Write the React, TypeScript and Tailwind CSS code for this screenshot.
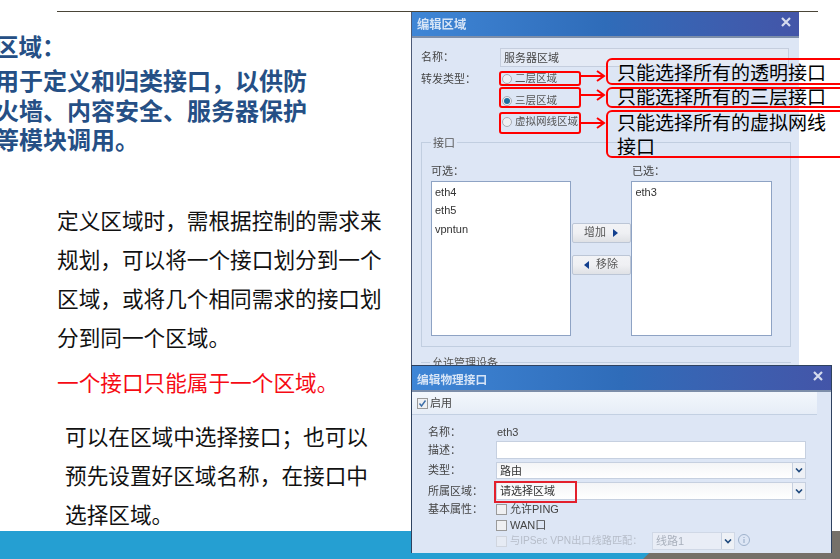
import React from "react";

const FONT = "font-['Liberation_Sans','Noto_Sans_CJK_SC',sans-serif]";

function Close() {
  return (
    <svg width="12" height="12" viewBox="0 0 12 12" className="shrink-0">
      <path d="M2 2 L10 10 M10 2 L2 10" stroke="#d5dcee" strokeWidth="2.2" />
    </svg>
  );
}

function TitleBar({ title, size }: { title: string; size: string }) {
  return (
    <div className="h-[26px] flex flex-col">
      <div className="h-[24px] flex items-start justify-between pl-[5px] pr-[7px] pt-[4px] bg-gradient-to-r from-[#3f86d6] via-[#2f6cb9] to-[#4355a8]">
        <span className={`${size} mt-[1px] leading-[17px] font-bold text-[#d6e4f6]`}>{title}</span>
        <Close />
      </div>
      <div className="h-[2px] bg-[#7d8ea9]" />
    </div>
  );
}

function Radio({ checked, label }: { checked?: boolean; label: string }) {
  return (
    <div className="flex items-center h-full gap-[3px] pl-[2px]">
      <span className="w-[10px] h-[10px] rounded-full border border-[#a7acb5] bg-[#eef0f4] flex items-center justify-center">
        {checked && <span className="w-[6px] h-[6px] rounded-full bg-[#1f6f9f]" />}
      </span>
      <span className="text-[10.5px] text-[#555] whitespace-nowrap">{label}</span>
    </div>
  );
}

function ListBox({ items, w }: { items: string[]; w: string }) {
  return (
    <div className={`${w} h-[155px] bg-white border border-[#8ea3c4] pl-[3px] pt-[1px] text-[11px] leading-[18.7px] text-[#333]`}>
      {items.map((i) => (
        <div key={i}>{i}</div>
      ))}
    </div>
  );
}

function Btn({ label, dir }: { label: string; dir: "l" | "r" }) {
  const tri = (
    <svg width="5" height="8" viewBox="0 0 5 8">
      <path d={dir === "r" ? "M0 0 L5 4 L0 8 Z" : "M5 0 L0 4 L5 8 Z"} fill="#123f8e" />
    </svg>
  );
  return (
    <div className="w-[59px] h-[20px] rounded-[2px] border border-[#bcc6d6] bg-gradient-to-b from-[#f2f3f6] via-[#eff0f3] to-[#dfe1e5] flex items-center justify-center gap-[7px] text-[11px] text-[#555]">
      {dir === "l" && tri}
      <span>{label}</span>
      {dir === "r" && tri}
    </div>
  );
}

function Arrow({ top }: { top: string }) {
  return (
    <svg width="26" height="12" viewBox="0 0 26 12" className={`absolute left-[580px] ${top}`}>
      <path d="M0 6 H24 M17 1 L24 6 L17 11" fill="none" stroke="#f00" strokeWidth="2" />
    </svg>
  );
}

function Chk({ disabled, checked }: { disabled?: boolean; checked?: boolean }) {
  return (
    <span className={`w-[11px] h-[11px] shrink-0 border flex items-center justify-center ${disabled ? "border-[#d0d5de] bg-[#e6ebf4]" : "border-[#9a9a9a] bg-[#eff0f2]"}`}>
      {checked && (
        <svg width="9" height="9" viewBox="0 0 9 9">
          <path d="M1.5 4.5 L3.5 7 L7.5 1.5" fill="none" stroke="#3c6ea8" strokeWidth="1.4" />
        </svg>
      )}
    </span>
  );
}

function Select({ text, w = "w-[310px]", h = "h-[18px]", disabled }: { text: string; w?: string; h?: string; disabled?: boolean }) {
  return (
    <div className={`${w} ${h} flex border ${disabled ? "border-[#d0d8e6] bg-[#e9edf6] text-[#a9b0bc]" : "border-[#c6d0e0] bg-gradient-to-b from-[#f4f5f7] to-white text-[#333]"} text-[11px]`}>
      <div className="flex-1 pl-[3px] leading-[17px] whitespace-nowrap">{text}</div>
      <div className="w-[13px] border-l border-[#c6d0e0] bg-[#eef1f6] flex items-center justify-center">
        <svg width="8" height="5" viewBox="0 0 8 5">
          <path d="M1 0.5 L4 3.5 L7 0.5" fill="none" stroke="#204a7e" strokeWidth="1.6" />
        </svg>
      </div>
    </div>
  );
}

export default function App() {
  return (
    <div className={`relative w-[840px] h-[559px] overflow-hidden bg-white ${FONT}`}>
      {/* top rule */}
      <div className="ml-[57px] mr-[22px] mt-[11px] h-px bg-[#4a4538]" />

      {/* left text */}
      <div className="ml-[-5px] mt-[22px] w-[330px] font-bold text-[#254f85] text-[24px] leading-[29.4px]">
        <div className="text-[23.5px]">区域：</div>
        <div className="mt-[4px] whitespace-nowrap">用于定义和归类接口，以供防</div>
        <div className="whitespace-nowrap">火墙、内容安全、服务器保护</div>
        <div className="whitespace-nowrap">等模块调用。</div>
      </div>

      <div className="ml-[57px] mt-[46px] text-[21.65px] leading-[39.2px] text-[#111] whitespace-nowrap">
        <div>定义区域时，需根据控制的需求来</div>
        <div>规划，可以将一个接口划分到一个</div>
        <div>区域，或将几个相同需求的接口划</div>
        <div>分到同一个区域。</div>
        <div className="mt-[6px] text-[#f60a14]">一个接口只能属于一个区域。</div>
        <div className="ml-[8px] mt-[14px]">可以在区域中选择接口；也可以</div>
        <div className="ml-[8px]">预先设置好区域名称，在接口中</div>
        <div className="ml-[8px]">选择区域。</div>
      </div>

      {/* bottom band */}
      <div className="absolute left-0 right-0 bottom-0 h-[28px] bg-[#259fd2]" />
      <svg width="200" height="28" viewBox="0 0 200 28" className="absolute left-[640px] top-[531px]">
        <path d="M3 28 L32 0 H200 V28 Z" fill="#757069" />
      </svg>

      {/* dialog: zone */}
      <div className="absolute left-[411px] top-[12px] w-[388px] h-[360px] bg-[#dde6f5] border-l border-[#4b5a78] blur-[0.3px]">
        <TitleBar title="编辑区域" size="text-[12.3px]" />
        <div className="pl-[9px] pr-[10px] pt-[10px] text-[11px] text-[#444]">
          <div className="flex h-[19px] items-center">
            <span className="w-[79px]">名称：</span>
            <div className="w-[289px] h-[19px] border border-[#c5cede] bg-[#e4eaf5] pl-[3px] leading-[19px] text-[#444]">服务器区域</div>
          </div>
          <div className="flex h-[22px] mt-[1px]">
            <span className="w-[79px] pt-[3px]">转发类型：</span>
            <Radio label="二层区域" />
          </div>
          <div className="pl-[79px] h-[21px]"><Radio checked label="三层区域" /></div>
          <div className="pl-[79px] h-[22px]"><Radio label="虚拟网线区域" /></div>
          <div className="mt-[9px] w-[370px] h-[205px] border border-[#c1cee0] relative pl-[9px] pr-[18px] pt-[20px]">
            <span className="absolute left-[9px] top-[-8px] bg-[#dde6f5] px-[2px] text-[#555]">接口</span>
            <div className="flex">
              <div className="w-[201px]">可选：</div>
              <div>已选：</div>
            </div>
            <div className="flex mt-[1px]">
              <ListBox w="w-[140px]" items={["eth4", "eth5", "vpntun"]} />
              <div className="w-[61px] pl-[1px] pt-[42px] flex flex-col gap-[12px]">
                <Btn label="增加" dir="r" />
                <Btn label="移除" dir="l" />
              </div>
              <ListBox w="w-[141px]" items={["eth3"]} />
            </div>
          </div>
          <div className="mt-[15px] w-[370px] border-t border-[#c1cee0] relative">
            <span className="absolute left-[9px] top-[-8px] bg-[#dde6f5] px-[2px] text-[#555]">允许管理设备</span>
          </div>
        </div>
      </div>

      {/* dialog: physical */}
      <div className="absolute left-[411px] top-[365px] w-[421px] h-[188px] bg-[#dde6f5] border border-[#2f4260] border-b-0 blur-[0.3px] text-[11px] text-[#444]">
        <TitleBar title="编辑物理接口" size="text-[11.7px]" />
        <div className="w-[405px] h-[23px] border-b border-[#c3d0e2] bg-gradient-to-b from-[#f3f7fc] to-[#e6edf7] flex items-center gap-[2px] pl-[5px]">
          <Chk checked />
          <span>启用</span>
        </div>
        <div className="pl-[16px] pt-[8px]">
          <div className="flex h-[18px] items-center">
            <span className="w-[69px]">名称：</span>
            <span>eth3</span>
          </div>
          <div className="flex h-[18px] mb-[3px] items-center">
            <span className="w-[68px]">描述：</span>
            <div className="w-[310px] h-[18px] border border-[#c6d0e0] bg-white" />
          </div>
          <div className="flex h-[17px] mb-[3px] items-center">
            <span className="w-[68px]">类型：</span>
            <Select text="路由" h="h-[17px]" />
          </div>
          <div className="flex h-[18px] items-center">
            <span className="w-[68px]">所属区域：</span>
            <Select text="请选择区域" />
          </div>
          <div className="flex h-[18px] items-center">
            <span className="w-[68px]">基本属性：</span>
            <span className="flex items-center gap-[3px]"><Chk />允许PING</span>
          </div>
          <div className="flex h-[13px] mt-[1px] items-center pl-[68px] gap-[3px]">
            <Chk />WAN口
          </div>
          <div className="flex h-[18px] items-center pl-[68px] gap-[3px] text-[#b6bdc9]">
            <Chk disabled />
            <span className="w-[139px] text-[10.2px] whitespace-nowrap">与IPSec VPN出口线路匹配：</span>
            <Select text="线路1" w="w-[83px]" disabled />
            <svg width="14" height="14" viewBox="0 0 14 14" className="ml-[-1px] mt-[-3px]">
              <circle cx="7" cy="7" r="5.5" fill="none" stroke="#9fb2cc" />
              <path d="M7 4 V5 M7 6 V10" stroke="#9fb2cc" strokeWidth="1.2" />
            </svg>
          </div>
        </div>
      </div>

      {/* annotations */}
      <div className="absolute left-[499px] top-[71px] w-[82px] h-[15px] border-2 border-[#f00] rounded-[3px]" />
      <div className="absolute left-[499px] top-[87px] w-[82px] h-[21px] border-2 border-[#f00] rounded-[3px]" />
      <div className="absolute left-[499px] top-[112px] w-[82px] h-[22px] border-2 border-[#f00] rounded-[3px]" />
      <Arrow top="top-[70px]" />
      <Arrow top="top-[89px]" />
      <Arrow top="top-[117px]" />
      <div className="absolute left-[606px] top-[58px] w-[250px] h-[27px] border-2 border-[#f00] rounded-[6px] pl-[9px] text-[19px] leading-[27px] text-black">只能选择所有的透明接口</div>
      <div className="absolute left-[606px] top-[87px] w-[250px] h-[21px] border-2 border-[#f00] rounded-[6px] pl-[9px] text-[19px] leading-[17px] text-black whitespace-nowrap overflow-hidden">只能选择所有的三层接口</div>
      <div className="absolute left-[606px] top-[110px] w-[250px] h-[48px] border-2 border-[#f00] rounded-[6px] pl-[9px] text-[19px] leading-[24px] text-black whitespace-nowrap">
        <div>只能选择所有的虚拟网线</div>
        <div>接口</div>
      </div>
      <div className="absolute left-[494px] top-[481px] w-[83px] h-[22px] border-2 border-[#e3202c]" />
    </div>
  );
}
